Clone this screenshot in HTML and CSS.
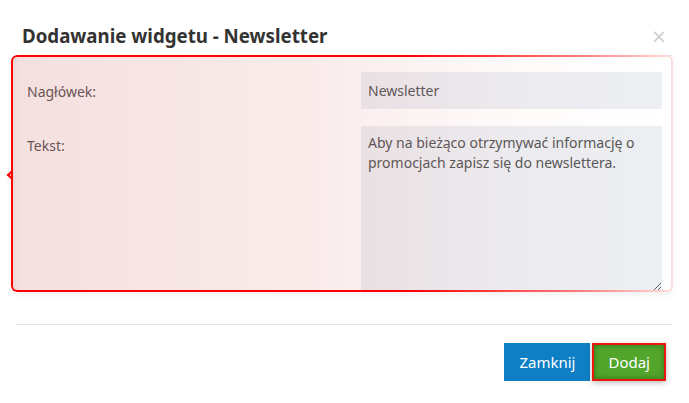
FILE: index.html
```html
<!DOCTYPE html>
<html lang="pl">
<head>
    <meta charset="UTF-8">
    <meta name="viewport" content="width=device-width, initial-scale=1.0">
    <title>Dodawanie widgetu - Newsletter</title>
    <link rel="stylesheet" href="styles.css">
</head>
<body>
    <div class="modal">
        <div class="modal-header">
            <h4 class="modal-title">Dodawanie widgetu - Newsletter</h4>
            <button type="button" class="close">&times;</button>
        </div>
        <div class="modal-body">
            <div class="highlight"><span class="highlight-tip"></span></div>
            <form class="widget-form">
                <label for="title">Nagłówek:</label>
                <input type="text" id="title" name="title" value="Newsletter">

                <label for="text">Tekst:</label>
                <textarea id="text" name="text">Aby na bieżąco otrzymywać informację o promocjach zapisz się do newslettera.</textarea>
            </form>
        </div>
        <div class="modal-footer">
            <button type="button" class="btn btn-close">Zamknij</button>
            <button type="submit" class="btn btn-add">Dodaj</button>
        </div>
    </div>
</body>
</html>
```

FILE: styles.css
```css
/* General Styling */
body {
    margin: 0;
    background: #fff;
    font-family: 'Noto Sans', 'Open Sans', sans-serif;
    color: #555;
}

.modal {
    width: 689px;
    height: 403px;
}

.modal-header {
    height: 56px;
    box-sizing: border-box;
    margin: 0 17px 0 16px;
    padding: 16px 5px 0 6px;
    border-bottom: 1px solid #e5e5e5;
    display: flex;
    align-items: center;
    justify-content: space-between;
}

.modal-title {
    margin: 0;
    font-size: 18.7px;
    font-weight: bold;
    color: #333;
    line-height: 24px;
}

.close {
    border: none;
    background: none;
    padding: 0;
    font-family: 'DejaVu Sans', sans-serif;
    font-size: 19px;
    line-height: 20px;
    color: #cfcfcf;
    cursor: pointer;
}

.modal-body {
    position: relative;
    padding: 16px 27px 33px 27px;
}

.widget-form {
    display: grid;
    grid-template-columns: 334px 1fr;
    row-gap: 17px;
}

label {
    font-size: 14px;
    line-height: 20px;
    padding-top: 10px;
}

input, textarea {
    border: none;
    background: #eceff3;
    font-family: inherit;
    font-size: 14px;
    color: #555;
    padding: 0 7px;
    box-sizing: border-box;
    width: 100%;
    margin: 0;
}

input {
    height: 37px;
}

textarea {
    height: 165px;
    padding: 7px;
    line-height: 20px;
    resize: vertical;
}

/* red annotation over the form */
.highlight {
    position: absolute;
    top: -1px;
    left: 11px;
    right: 16px;
    bottom: 32px;
    border-radius: 6px;
    background: linear-gradient(to right, rgba(200, 80, 80, 0.18), rgba(215, 90, 90, 0.12) 45%, rgba(235, 120, 120, 0.04) 75%, rgba(255, 255, 255, 0));
    box-shadow: inset 8px 0 8px -6px rgba(0, 0, 0, 0.08), 0 3px 6px rgba(0, 0, 0, 0.06);
    pointer-events: none;
    z-index: 1;
}

.highlight::after {
    content: "";
    position: absolute;
    inset: 0;
    padding: 2px;
    border-radius: 6px;
    background: linear-gradient(to right, #f00, #f00 60%, #f77 85%, #fdd);
    -webkit-mask: linear-gradient(#000 0 0) content-box, linear-gradient(#000 0 0);
    -webkit-mask-composite: xor;
    mask-composite: exclude;
}

.highlight-tip {
    position: absolute;
    left: -3px;
    top: 117px;
    width: 4px;
    height: 4px;
    border-left: 2px solid #f00;
    border-bottom: 2px solid #f00;
    transform: rotate(45deg);
}

.modal-footer {
    margin: 0 17px 0 16px;
    padding: 18px 6px 0;
    border-top: 1px solid #e5e5e5;
    display: flex;
    justify-content: flex-end;
    gap: 2px;
}

.btn {
    height: 38px;
    border: none;
    color: #fff;
    font-family: inherit;
    font-size: 15px;
    padding: 0 15px;
    cursor: pointer;
}

.btn-close {
    background: #0e7fc4;
}

.btn-add {
    background: #53a62c;
    border: 2px solid #e8180c;
    padding: 0 14px;
    box-shadow: inset 0 0 6px rgba(30, 80, 10, 0.6), 0 2px 6px rgba(0, 0, 0, 0.25);
}
```
